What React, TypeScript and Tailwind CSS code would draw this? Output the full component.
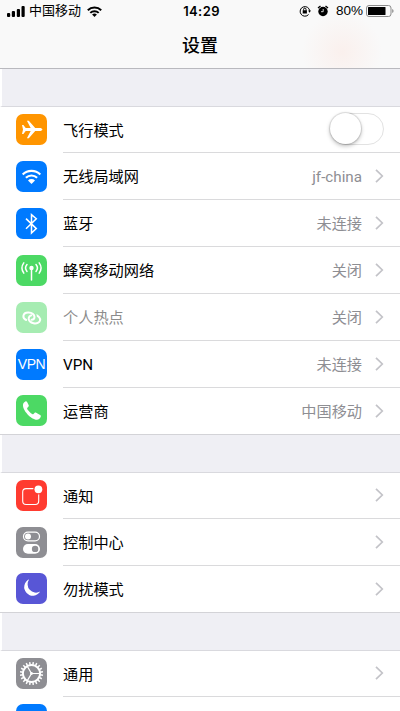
import type { ReactNode } from "react";

const Tile = ({ color, children }: { color: string; children?: ReactNode }) => (
  <div className={`-mt-px w-[31px] h-[31px] shrink-0 rounded-[7px] overflow-hidden ${color}`}>
    <svg viewBox="0 0 31 31" className="w-[31px] h-[31px]" fill="none" stroke="white">
      {children}
    </svg>
  </div>
);

const teeth = Array.from({ length: 20 }, (_, i) => i * 18);

const icons = {
  plane: (
    <Tile color="bg-[#ff9500]">
      <path
        stroke="none"
        fill="white"
        d="M6 11h1.400l2.300 3h5L10.900 6.800h1.900l6.400 7.200h4.300c1.600 0 2.900.6 2.900 1.500s-1.300 1.500-2.900 1.500h-4.300l-6.400 7.200h-1.900L14.700 17h-5l-2.300 3H6l1-4.500z"
      />
    </Tile>
  ),
  wifi: (
    <Tile color="bg-[#007aff]">
      <path strokeWidth="2.1" d="M6.700 13.500a12.500 12.500 0 0 1 17.600 0M9.900 16.800a7.900 7.900 0 0 1 11.200 0" />
      <path stroke="none" fill="white" d="M12 19.500a4.900 4.900 0 0 1 7 0l-3.500 3.500z" />
    </Tile>
  ),
  bluetooth: (
    <Tile color="bg-[#007aff]">
      <path strokeWidth="1.5" d="M10 10.600l10.300 10-4.800 4.400V6.600l4.800 4.200L10 20.800" />
    </Tile>
  ),
  cellular: (
    <Tile color="bg-[#4cd964]">
      <circle cx="15.500" cy="13" r="2.200" fill="white" stroke="none" />
      <path
        strokeWidth="1.500"
        strokeLinecap="round"
        d="M15.500 13.500v11.600M11 9.600a5.200 5.200 0 0 0 0 6.800M20 9.600a5.200 5.200 0 0 1 0 6.800M7.800 7.900a8.600 8.600 0 0 0 0 10.200M23.200 7.900a8.600 8.600 0 0 1 0 10.200"
      />
    </Tile>
  ),
  hotspot: (
    <Tile color="bg-[#a6ecb2]">
      <g strokeLinecap="round">
        <ellipse cx="18.400" cy="17.200" rx="5.800" ry="4.200" transform="rotate(12 18.400 17.200)" strokeWidth="2" />
        <path stroke="#a6ecb2" strokeWidth="4" strokeLinecap="butt" d="M17.200 11.600c1.500 1.200 1.900 2.800 1.300 4.300" />
        <path
          strokeWidth="2"
          d="M10.200 18c-2-.8-3-2.200-2.800-4.100.3-2.200 2.500-3.500 5.100-3.400 3.300.2 6 2 6 4.600 0 1.700-1.300 2.700-2.900 2.700"
        />
      </g>
    </Tile>
  ),
  vpn: (
    <div className="-mt-px flex w-[31px] h-[31px] shrink-0 items-center justify-center rounded-[7px] bg-[#007aff] text-[14px] leading-none tracking-[-0.5px] text-white font-['Liberation_Sans',sans-serif]">
      VPN
    </div>
  ),
  phone: (
    <Tile color="bg-[#4cd964]">
      <path
        stroke="none"
        fill="white"
        d="M7.100 9.100c.4-1.300 1.300-2.300 2.300-2.700.7-.3 1.300 0 1.700.7l1.500 3c.4.8.2 1.400-.5 2l-.7.7c-.4.4-.4.9-.1 1.400.6 1.100 3.500 4.100 4.900 4.900.5.3.9.2 1.300-.1l1-1c.5-.5 1.100-.6 1.700-.2l3.900 2.100c.7.4.9.9.7 1.600-.5 1.600-1.900 3.200-4 3.200-2.800 0-6.700-2.700-9.200-5.300-2.900-3.100-5.100-6.800-4.500-10.300z"
      />
    </Tile>
  ),
  notify: (
    <Tile color="bg-[#ff3b30]">
      <rect x="6.700" y="8.600" width="16" height="15.900" rx="3.400" strokeWidth="1.100" />
      <circle cx="22.400" cy="9.300" r="5.200" fill="#ff3b30" stroke="none" />
      <circle cx="22.400" cy="9.300" r="3.900" fill="white" stroke="none" />
    </Tile>
  ),
  control: (
    <Tile color="bg-[#8e8e93]">
      <rect x="7.500" y="5.100" width="16" height="8.800" rx="4.400" strokeWidth="1.200" />
      <circle cx="12" cy="9.500" r="3" fill="white" stroke="none" />
      <rect x="7" y="17" width="17" height="9.800" rx="4.900" fill="white" stroke="none" />
      <circle cx="19.100" cy="21.900" r="3.200" fill="#8e8e93" stroke="none" />
    </Tile>
  ),
  moon: (
    <Tile color="bg-[#5856d6]">
      <path
        stroke="none"
        fill="white"
        d="M13.200 6.300A8.600 8.600 0 1 0 24.200 18.500 8.400 8.400 0 0 1 13.200 6.300z"
      />
    </Tile>
  ),
  gear: (
    <Tile color="bg-[#8e8e93]">
      <circle cx="15.500" cy="15.500" r="8.600" strokeWidth="2" />
      {teeth.map((a) => (
        <path key={a} strokeWidth="1.500" d="M15.500 3.900v3" transform={`rotate(${a + 9} 15.500 15.500)`} />
      ))}
      <path strokeWidth="1.200" d="M15.500 15.500h8.500M15.500 15.500l-4.300-7.400M15.500 15.500l-4.300 7.400" />
      <circle cx="15.500" cy="15.500" r="1.400" fill="white" stroke="none" />
    </Tile>
  ),
};

type Item = { icon: ReactNode; label: string; value?: string; toggle?: boolean; dim?: boolean };

const groups: Item[][] = [
  [
    { icon: icons.plane, label: "飞行模式", toggle: true },
    { icon: icons.wifi, label: "无线局域网", value: "jf-china" },
    { icon: icons.bluetooth, label: "蓝牙", value: "未连接" },
    { icon: icons.cellular, label: "蜂窝移动网络", value: "关闭" },
    { icon: icons.hotspot, label: "个人热点", value: "关闭", dim: true },
    { icon: icons.vpn, label: "VPN", value: "未连接" },
    { icon: icons.phone, label: "运营商", value: "中国移动" },
  ],
  [
    { icon: icons.notify, label: "通知" },
    { icon: icons.control, label: "控制中心" },
    { icon: icons.moon, label: "勿扰模式" },
  ],
  [
    { icon: icons.gear, label: "通用" },
    { icon: <Tile color="bg-[#007aff]" />, label: "" },
  ],
];

const Row = ({ item, first, last }: { item: Item; first: boolean; last: boolean }) => (
  <div
    className={`flex shrink-0 items-center pl-4 ${first ? "h-[46px]" : "h-[47px]"} ${
      last ? "border-b border-[#d3d3d7]" : ""
    }`}
  >
    {item.icon}
    <div
      className={`ml-4 flex h-full flex-1 items-center pr-4 ${last ? "" : "border-b border-[#dadadc]"}`}
    >
      <span className={`pt-[2px] text-[15.2px] leading-5 ${item.dim ? "text-[#8c8c8c]" : "text-black"}`}>
        {item.label}
      </span>
      <div className="ml-auto flex items-center">
        {item.toggle ? (
          <div className="-mt-px h-[32px] w-[54px] rounded-full border border-[#e2e2e2] bg-white">
            <div className="-ml-px -mt-px h-[31px] w-[31px] rounded-full bg-white shadow-[0_2px_4px_rgba(0,0,0,0.26),0_0_1px_1px_rgba(0,0,0,0.12)]" />
          </div>
        ) : (
          <>
            <span className="mr-[13px] pt-[2px] text-[15.2px] leading-5 text-[#8e8e93]">{item.value}</span>
            <svg className="-mt-px" width="9" height="14" viewBox="0 0 9 14" fill="none" stroke="#c3c3c8" strokeWidth="1.700">
              <path d="M1 .8l6.300 6.200L1 13.200" />
            </svg>
          </>
        )}
      </div>
    </div>
  </div>
);

const StatusBar = () => (
  <div className="grid h-[22px] grid-cols-[1fr_auto_1fr] items-center">
    <div className="flex items-center pl-[7px]">
      <svg width="18" height="11" viewBox="0 0 18 11">
        <rect x="0" y="7" width="3.200" height="4" rx="1" />
        <rect x="4.800" y="5" width="3.200" height="6" rx="1" />
        <rect x="9.800" y="3" width="3.200" height="8" rx="1" />
        <rect x="14.500" y="0" width="3.200" height="11" rx="1" />
      </svg>
      <span className="ml-[4px] text-[13px] leading-5">中国移动</span>
      <svg className="ml-[6px]" width="15" height="11" viewBox="0 0 15 11" fill="none" stroke="black">
        <path strokeWidth="2" d="M.8 4.200a9.500 9.500 0 0 1 13.400 0M3.300 6.900a6 6 0 0 1 8.400 0" />
        <path stroke="none" fill="black" d="M5.100 8.600a3.400 3.400 0 0 1 4.800 0L7.500 11z" />
      </svg>
    </div>
    <span className="ml-[3px] text-[13px] font-semibold leading-5 tracking-[0.4px] font-[Inter,sans-serif]">14:29</span>
    <div className="flex items-center justify-end pr-[6px]">
      <svg width="12" height="12" viewBox="0 0 12 12" fill="none" stroke="black">
        <path d="M9.600 9.500A4.800 4.800 0 1 1 10.700 5.800" />
        <path fill="black" stroke="none" d="M9.100 5.500H12l-1.500 2.200zM3.700 5.300h4.200v3.300H3.700z" />
        <path d="M4.600 5.500V4.300a1.200 1.200 0 0 1 2.400 0v1.200" />
      </svg>
      <svg className="ml-[6px]" width="12" height="12" viewBox="0 0 12 12">
        <circle cx="6" cy="6.500" r="4.700" />
        <path d="M1 3.100L3.500.9M11 3.100L8.500.9" stroke="black" strokeWidth="1.300" />
        <path d="M6.200 4v2.700H4" fill="none" stroke="white" strokeWidth=".8" />
      </svg>
      <span className="ml-[7px] text-[13.500px] leading-5 font-['Liberation_Sans',sans-serif]">80%</span>
      <svg className="ml-[3px]" width="28" height="12" viewBox="0 0 28 12">
        <rect x=".5" y=".5" width="24.500" height="11" rx="2.500" fill="none" stroke="#8b8b8b" />
        <rect x="2" y="2" width="17.500" height="8" rx=".6" />
        <path d="M26.300 4v4c1.600-.6 1.600-3.400 0-4z" fill="#777" />
      </svg>
    </div>
  </div>
);

export default function App() {
  return (
    <div className="flex h-[711px] w-[400px] flex-col overflow-hidden bg-white text-black font-[Roboto,'Noto_Sans_CJK_SC',sans-serif]">
      <header className="h-[69px] shrink-0 border-b border-[#b9b9be] bg-[#f9f9f9] bg-[radial-gradient(circle_at_342px_52px,#faf0ed_0px,#f9f9f9_40px)]">
        <StatusBar />
        <h1 className="pt-[11px] text-center text-[18px] font-medium leading-[26px]">设置</h1>
      </header>
      {groups.map((items, g) => (
        <section key={g} className="flex shrink-0 flex-col">
          <div className="h-[38px] border-b border-l-2 border-[#d9d9de] border-l-white bg-[#efeff4]" />
          {items.map((item, i) => (
            <Row key={i} item={item} first={i === 0} last={i === items.length - 1} />
          ))}
        </section>
      ))}
    </div>
  );
}
